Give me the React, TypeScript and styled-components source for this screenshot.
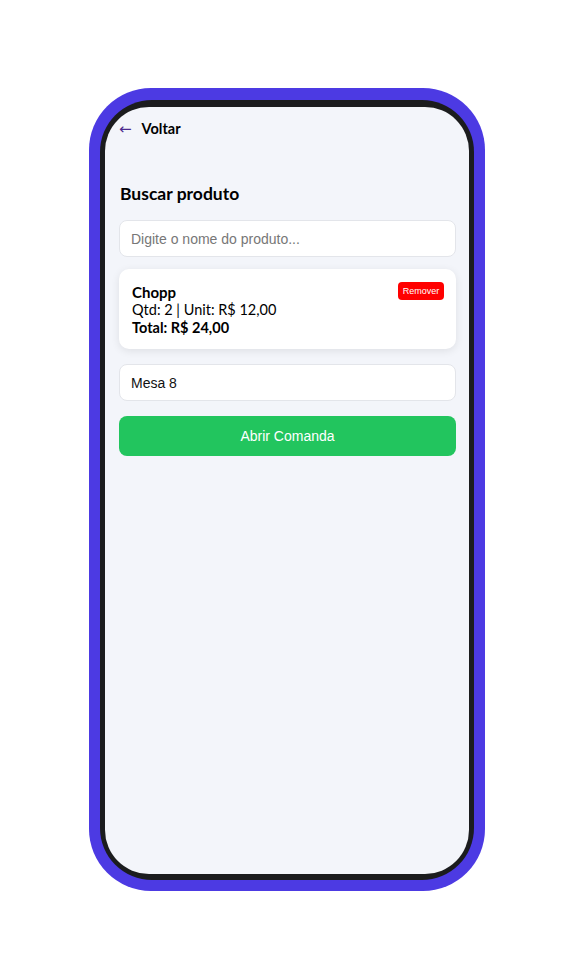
import React from 'react'
import styled, { createGlobalStyle } from 'styled-components'

const GlobalStyle = createGlobalStyle`
  html, body {
    margin: 0;
    padding: 0;
    background: #ffffff;
  }
  * {
    box-sizing: border-box;
  }
`

const Page = styled.div`
  width: 567px;
  height: 980px;
  padding: 88px 0 0 89px;
`

const Phone = styled.div`
  width: 396px;
  height: 803px;
  background: #4c3ae3;
  border-radius: 62px;
  padding: 12px 11px 11px 11px;
`

const Bezel = styled.div`
  height: 100%;
  background: #1b1c1e;
  border-radius: 52px;
  padding: 7px 5px 6px 5px;
`

const Screen = styled.div`
  height: 100%;
  background: #f3f5fa;
  border-radius: 44px;
  overflow: hidden;
  padding: 12px 13px 0 14px;
  font-family: Lato, 'Noto Sans', sans-serif;
  color: #000;
`

const BackRow = styled.div`
  display: flex;
  align-items: center;
  height: 20px;
  gap: 10px;
`

const BackArrow = styled.span`
  color: #4b2a8f;
  font-size: 15px;
  line-height: 20px;
  font-family: 'DejaVu Sans', sans-serif;
`

const BackLabel = styled.span`
  font-size: 14.5px;
  font-weight: 700;
  line-height: 20px;
`

const Title = styled.h2`
  margin: 44px 0 0 1px;
  font-size: 17.5px;
  line-height: 22px;
  font-weight: 700;
`

const Field = styled.input<{ $top?: number }>`
  display: block;
  width: 100%;
  height: 37px;
  margin-top: ${p => p.$top ?? 15}px;
  padding: 0 11px;
  border: 1px solid #e3e5ea;
  border-radius: 8px;
  background: #fff;
  font-family: 'Liberation Sans', Arial, sans-serif;
  font-size: 14px;
  color: #111;
  outline: none;

  &::placeholder {
    color: #777;
  }
`

const ItemCard = styled.div`
  display: flex;
  justify-content: space-between;
  align-items: flex-start;
  margin-top: 12px;
  padding: 13px 12px 12px 13px;
  background: #fff;
  border-radius: 10px;
  box-shadow: 0 2px 8px rgba(0, 0, 0, 0.09);
`

const ItemInfo = styled.div`
  display: flex;
  flex-direction: column;
`

const ItemName = styled.div`
  font-size: 15px;
  font-weight: 700;
  line-height: 18px;
  margin-top: 1px;
`

const ItemLine = styled.div<{ $bold?: boolean }>`
  font-size: 14.5px;
  line-height: 18px;
  font-weight: ${p => (p.$bold ? 700 : 400)};
`

const RemoveButton = styled.button`
  height: 18px;
  width: 46px;
  padding: 0;
  border: none;
  border-radius: 4px;
  background: #ff0000;
  color: #fff;
  font-family: 'Liberation Sans', Arial, sans-serif;
  font-size: 9px;
  cursor: pointer;
`

const SubmitButton = styled.button`
  display: block;
  width: 100%;
  height: 40px;
  margin-top: 15px;
  border: none;
  border-radius: 8px;
  background: #22c55e;
  color: #fff;
  font-family: 'Liberation Sans', Arial, sans-serif;
  font-size: 14px;
  cursor: pointer;
`

export default function App() {
  return (
    <>
      <GlobalStyle />
      <Page>
        <Phone>
          <Bezel>
            <Screen>
              <BackRow>
                <BackArrow>←</BackArrow>
                <BackLabel>Voltar</BackLabel>
              </BackRow>
              <Title>Buscar produto</Title>
              <Field placeholder="Digite o nome do produto..." />
              <ItemCard>
                <ItemInfo>
                  <ItemName>Chopp</ItemName>
                  <ItemLine>Qtd: 2 | Unit: R$ 12,00</ItemLine>
                  <ItemLine $bold>Total: R$ 24,00</ItemLine>
                </ItemInfo>
                <RemoveButton>Remover</RemoveButton>
              </ItemCard>
              <Field defaultValue="Mesa 8" />
              <SubmitButton>Abrir Comanda</SubmitButton>
            </Screen>
          </Bezel>
        </Phone>
      </Page>
    </>
  )
}
